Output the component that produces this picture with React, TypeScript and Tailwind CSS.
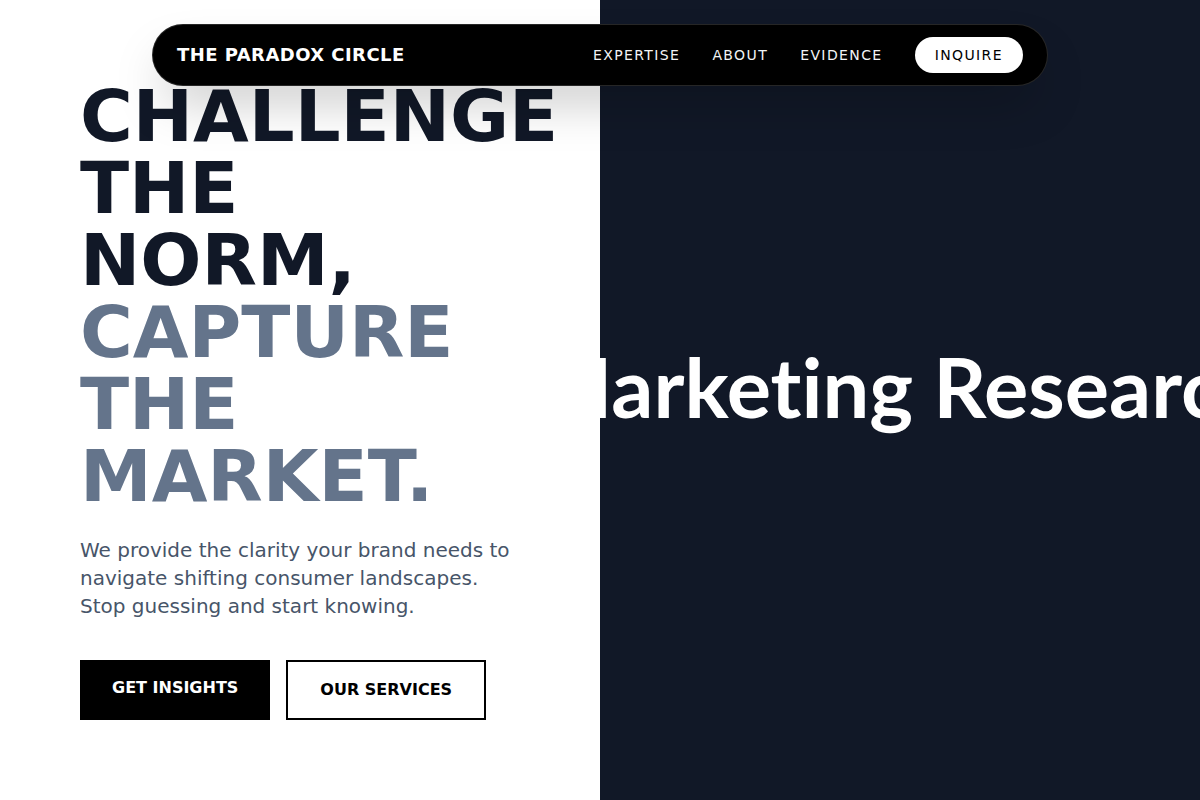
import React from 'react';

const navLinks = ['Expertise', 'About', 'Evidence'];

const Navbar: React.FC = () => (
  <nav className="absolute top-6 left-1/2 -translate-x-1/2 w-full max-w-4xl z-20 bg-black border border-white/15 rounded-full px-6 py-3 flex items-center justify-between shadow-2xl">
    <span className="text-white text-lg font-bold tracking-wide">THE PARADOX CIRCLE</span>
    <div className="flex items-center gap-8">
      {navLinks.map(l => (
        <a key={l} href="#" className="text-gray-100 text-sm tracking-widest uppercase">
          {l}
        </a>
      ))}
      <a href="#" className="bg-white text-black text-sm tracking-widest rounded-full px-5 py-2 leading-5">
        INQUIRE
      </a>
    </div>
  </nav>
);

const App: React.FC = () => {
  return (
    <div className="relative w-full h-[800px] flex overflow-hidden" style={{ fontFamily: '"DejaVu Sans", Verdana, sans-serif' }}>
      <Navbar />
      {/* Left column */}
      <section className="w-1/2 h-full bg-white flex flex-col justify-center px-20">
        <h1 className="text-[72px] leading-[72px] font-bold text-[#111827]">
          CHALLENGE THE NORM, <span className="text-[#64748b]">CAPTURE THE MARKET.</span>
        </h1>
        <p className="mt-6 max-w-md text-xl leading-7 text-[#475569]">
          We provide the clarity your brand needs to navigate shifting consumer landscapes. Stop guessing and start knowing.
        </p>
        <div className="mt-10 flex gap-4">
          <button className="bg-black text-white font-bold text-base px-8 pt-4 pb-5">GET INSIGHTS</button>
          <button className="bg-white text-black font-bold text-base px-8 py-4 border-2 border-black">OUR SERVICES</button>
        </div>
      </section>
      {/* Right column: scrolling word track, frozen mid-way */}
      <section className="w-1/2 h-full bg-[#111827] flex items-center overflow-hidden">
        <div
          className="whitespace-nowrap text-white text-[83px] font-bold ml-[-66px] mb-[28px] [font-variant-ligatures:none]"
          style={{ fontFamily: 'Lato, "Open Sans", sans-serif' }}
        >
          Marketing Research
        </div>
      </section>
    </div>
  );
};

export default App;
